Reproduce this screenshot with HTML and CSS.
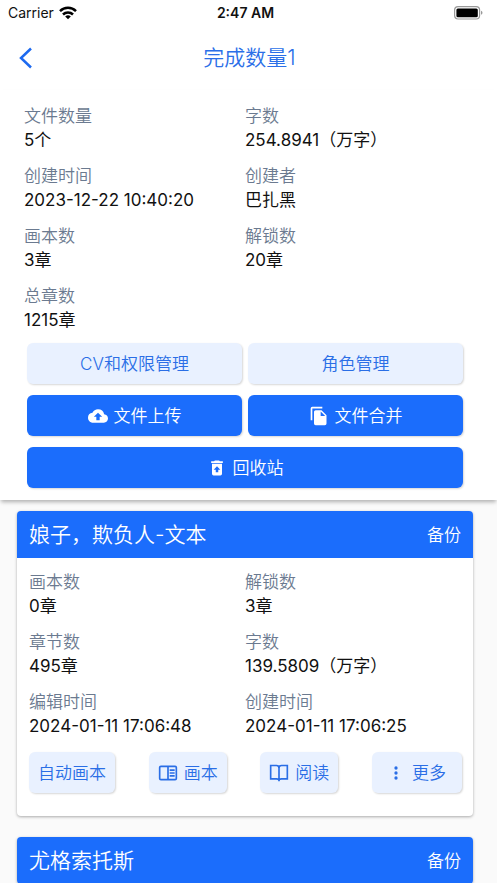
FILE: index.html
```html
<!DOCTYPE html>
<html lang="zh-CN">
<head>
<meta charset="utf-8">
<meta name="viewport" content="width=device-width, initial-scale=1">
<title>完成数量1</title>
<link rel="stylesheet" href="styles.css">
</head>
<body>
<div class="status">
  <div class="status-left">
    <span>Carrier</span>
    <svg width="18" height="14" viewBox="0 0 18 14" aria-hidden="true"><g fill="none" stroke="#000" stroke-width="2.5"><path d="M1 5.1a11.4 11.4 0 0 1 16 0"/><path d="M4 8.500a7.100 7.100 0 0 1 10 0"/></g><path d="M9 13.300 6.200 10.500a4 4 0 0 1 5.600 0z"/></svg>
  </div>
  <strong class="clock">2:47 AM</strong>
  <svg class="battery" width="29" height="14" viewBox="0 0 29 14" aria-hidden="true"><rect x=".6" y=".6" width="25" height="12.400" rx="3.500" fill="none" stroke="#999" stroke-width="1.200"/><rect x="2.400" y="2.400" width="21.400" height="8.800" rx="1.500"/><path d="M27 4.800q1.500.5 1.500 2t-1.500 2z" fill="#999"/></svg>
</div>
<header class="nav">
  <button class="back" type="button" aria-label="返回"><svg width="14" height="22" viewBox="0 0 14 22"><path d="M12 1.500 2 11l10 9.500" fill="none" stroke="currentColor" stroke-width="2.500"/></svg></button>
  <h1>完成数量1</h1>
</header>
<section class="summary">
  <dl class="facts">
    <div><dt>文件数量</dt><dd>5个</dd></div>
    <div><dt>字数</dt><dd>254.8941（万字）</dd></div>
    <div><dt>创建时间</dt><dd>2023-12-22 10:40:20</dd></div>
    <div><dt>创建者</dt><dd>巴扎黑</dd></div>
    <div><dt>画本数</dt><dd>3章</dd></div>
    <div><dt>解锁数</dt><dd>20章</dd></div>
    <div><dt>总章数</dt><dd>1215章</dd></div>
  </dl>
  <div class="actions">
    <button class="btn" type="button">CV和权限管理</button>
    <button class="btn" type="button">角色管理</button>
    <button class="btn primary" type="button"><svg width="20" height="20" viewBox="0 0 24 24"><path fill="currentColor" d="M19.350 10.040A7.490 7.490 0 0 0 12 4C9.110 4 6.600 5.640 5.350 8.040A5.994 5.994 0 0 0 0 14c0 3.310 2.690 6 6 6h13c2.760 0 5-2.240 5-5 0-2.640-2.050-4.780-4.650-4.960zM14 13v4h-4v-4H7l5-5 5 5h-3z"/></svg>文件上传</button>
    <button class="btn primary" type="button"><svg width="20" height="20" viewBox="0 0 24 24"><path fill="currentColor" d="M16 1H4a2 2 0 0 0-2 2v14h2V3h12V1zm-1 4 6 6v10a2 2 0 0 1-2 2H8a2 2 0 0 1-2-2V7a2 2 0 0 1 2-2h7zm-1 7h5.500L14 6.500V12z"/></svg>文件合并</button>
    <button class="btn primary wide" type="button"><svg width="20" height="20" viewBox="0 0 24 24"><path fill="currentColor" d="M6 19a2 2 0 0 0 2 2h8a2 2 0 0 0 2-2V7H6v12zm6-9 4 4h-2.500v3h-3v-3H8l4-4zm3.500-6-1-1h-5l-1 1H5v2h14V4z"/></svg>回收站</button>
  </div>
</section>
<main class="list">
  <article class="card">
    <header class="card-head"><h2>娘子，欺负人-文本</h2><button class="backup" type="button">备份</button></header>
    <div class="card-body">
      <dl class="facts">
        <div><dt>画本数</dt><dd>0章</dd></div>
        <div><dt>解锁数</dt><dd>3章</dd></div>
        <div><dt>章节数</dt><dd>495章</dd></div>
        <div><dt>字数</dt><dd>139.5809（万字）</dd></div>
        <div><dt>编辑时间</dt><dd>2024-01-11 17:06:48</dd></div>
        <div><dt>创建时间</dt><dd>2024-01-11 17:06:25</dd></div>
      </dl>
      <div class="tools">
        <button class="btn" type="button">自动画本</button>
        <button class="btn" type="button"><svg width="20" height="20" viewBox="0 0 24 24"><g fill="none" stroke="currentColor" stroke-width="2"><rect x="2" y="4" width="20" height="16" rx="1.500"/><path d="M12 4v16M14 8.500h6M14 12h6M14 15.500h6"/></g></svg>画本</button>
        <button class="btn" type="button"><svg width="20" height="20" viewBox="0 0 24 24"><path fill="none" stroke="currentColor" stroke-width="2" d="M12 22V6q0-3-3-3H2v16h7q3 0 3 2 0-2 3-2h7V3h-7q-3 0-3 3"/></svg>阅读</button>
        <button class="btn more" type="button"><svg width="20" height="20" viewBox="0 0 24 24"><g fill="currentColor"><circle cx="12" cy="6" r="2"/><circle cx="12" cy="12" r="2"/><circle cx="12" cy="18" r="2"/></g></svg>更多</button>
      </div>
    </div>
  </article>
  <article class="card">
    <header class="card-head"><h2>尤格索托斯</h2><button class="backup" type="button">备份</button></header>
  </article>
</main>
</body>
</html>
```
FILE: styles.css
```css
* { box-sizing: border-box; }
html { height: 100%; overflow: hidden; }
body {
  height: 100%;
  margin: 0;
  overflow: hidden;
  background: #fafafa;
  color: #111;
  font: 17px/24px Inter, "Noto Sans CJK SC", sans-serif;
}
h1, h2, dl, dd { margin: 0; font-weight: 350; }
button { font: inherit; border: 0; padding: 0; cursor: pointer; }
svg { display: block; flex: none; }

.status {
  display: grid;
  grid-template-columns: 1fr auto 1fr;
  align-items: center;
  height: 26px;
  padding: 0 14px 0 8px;
  background: #fff;
  font-size: 14px;
}
.status-left { display: flex; align-items: center; gap: 5px; }
.clock { font-weight: 600; }
.battery { justify-self: end; }

.nav {
  display: grid;
  grid-template-columns: 40px 1fr 40px;
  align-items: center;
  height: 64px;
  padding: 0 4px 0 6px;
  background: #fff;
  color: #2b6fe8;
}
.back { display: grid; place-items: center; height: 44px; background: none; color: #1d6af0; }
.nav h1 { font-size: 21px; text-align: center; }

.summary {
  padding: 14px 31px 12px 24px;
  background: #fff;
  box-shadow: 0 3px 4px -1px rgba(0, 0, 0, .3);
}
.facts { display: grid; grid-template-columns: 1fr 1fr; row-gap: 12px; }
.facts dt { color: #6b7a90; font-weight: 350; }
.facts dd { font-weight: 400; white-space: nowrap; }

.actions {
  display: grid;
  grid-template-columns: 1fr 1fr;
  gap: 11px 6px;
  padding: 11px 3px 0;
}
.btn {
  display: flex;
  align-items: center;
  justify-content: center;
  gap: 6px;
  height: 41px;
  padding: 0 9px;
  border-radius: 6px;
  background: #e9f1ff;
  color: #2a6ee6;
  font-weight: 350;
  white-space: nowrap;
  box-shadow: 1px 1px 2px rgba(0, 0, 0, .16);
}
.primary { background: #1b6dfc; color: #fff; }
.wide { grid-column: 1 / -1; }

.list {
  display: grid;
  gap: 21px;
  padding: 11px 24px 0 17px;
}
.card {
  overflow: hidden;
  border-radius: 4px;
  background: #fff;
  box-shadow: 0 1px 3px rgba(0, 0, 0, .32);
}
.card-head {
  display: flex;
  align-items: center;
  justify-content: space-between;
  height: 47px;
  padding: 0 12px;
  background: #1b6dfc;
  color: #fff;
}
.card-head h2 { font-size: 21px; }
.backup { background: none; color: inherit; font-weight: 350; }
.card-body { padding: 12px 12px 23px; }
.tools {
  display: flex;
  justify-content: space-between;
  margin-right: -1px;
  padding-top: 14px;
}
.more { padding: 0 16px 0 14px; }
```
